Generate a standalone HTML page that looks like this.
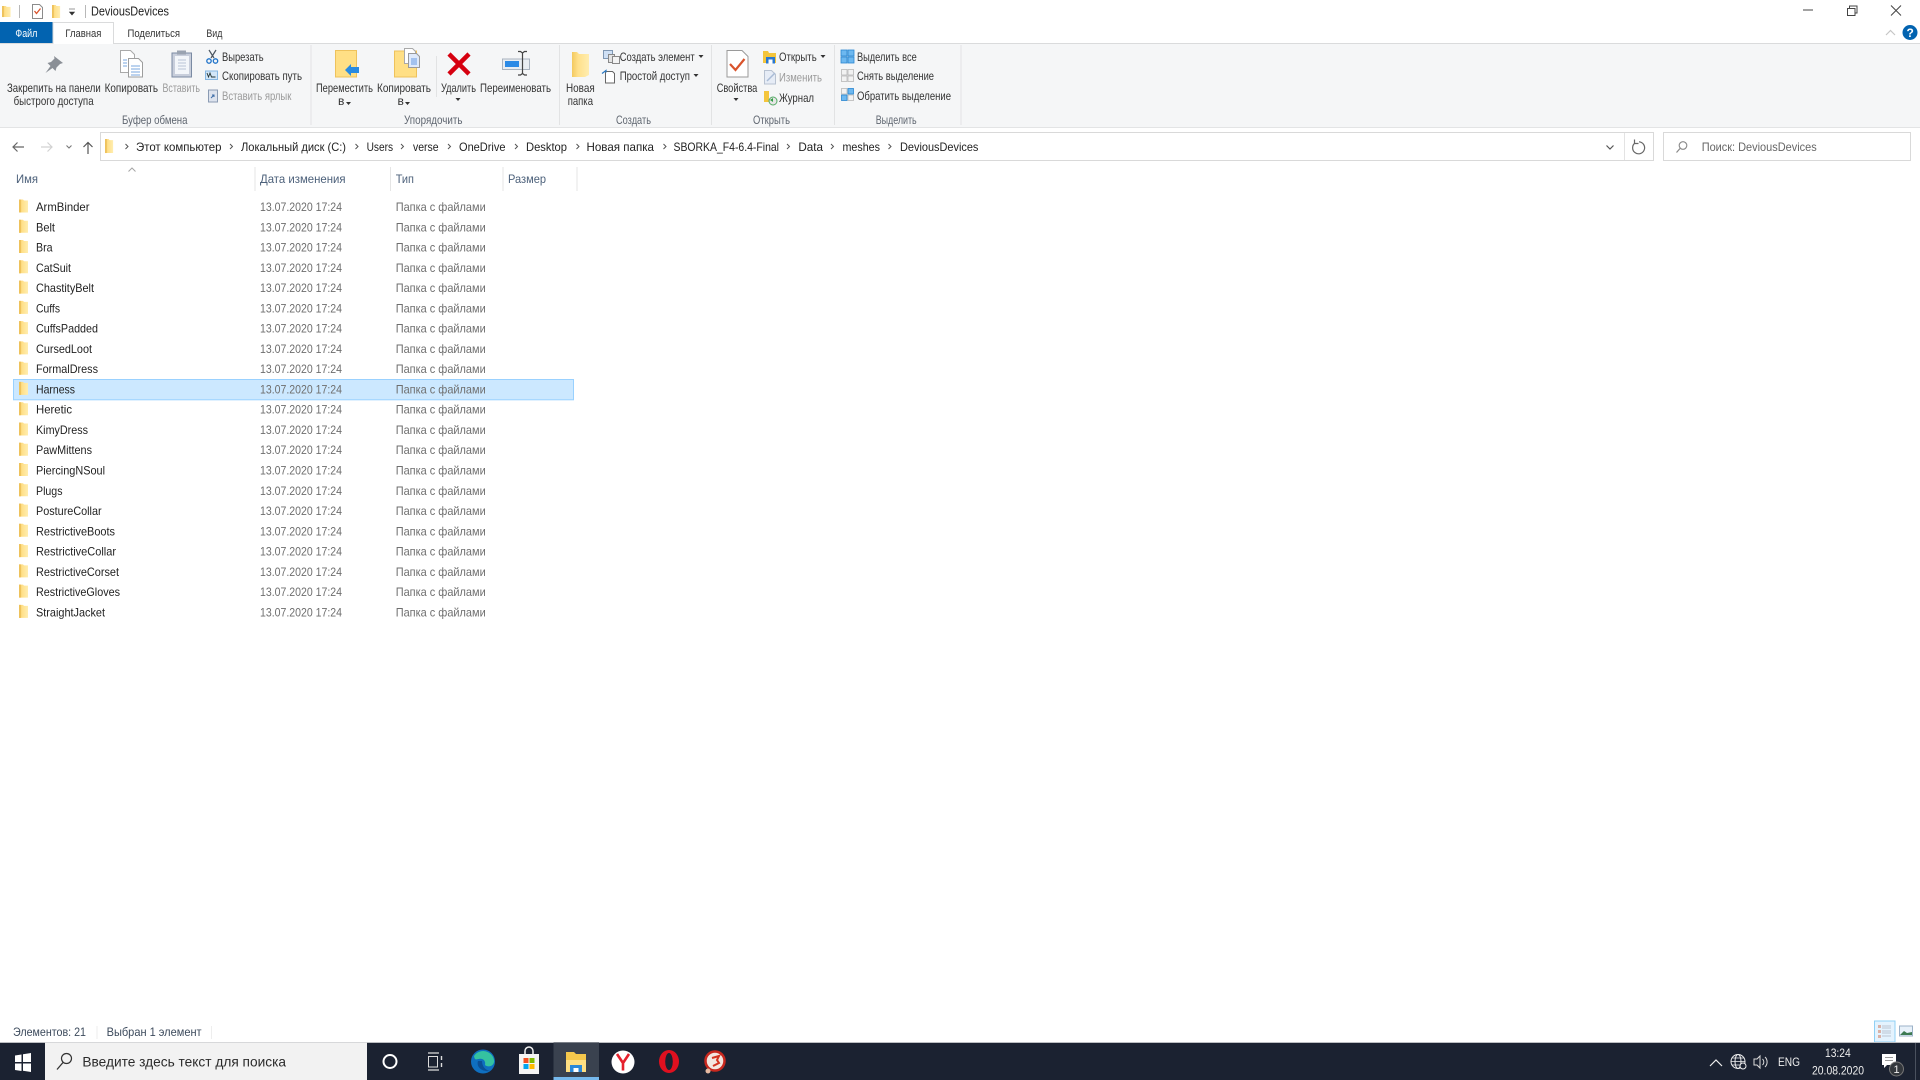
<!DOCTYPE html>
<html lang="ru"><head><meta charset="utf-8"><title>DeviousDevices</title>
<style>
html,body{margin:0;padding:0;background:#fff;overflow:hidden}
svg{display:block;position:absolute;left:0;top:0;filter:blur(.3px)}
text{font-family:"Liberation Sans","Noto Sans CJK JP",sans-serif;font-size:12px;fill:#333}
.g{fill:#9a9a9a}.l{fill:#5f6670}.t{font-size:13px;fill:#222}
.n{fill:#1f1f1f}.d{fill:#6e6e6e}.h{fill:#4c607a}.a{fill:#222;font-size:12px}
.b{fill:#2b2b2b;font-size:14px}.w{fill:#fff;font-size:12px}
</style></head><body>
<svg width="1920" height="1080" viewBox="0 0 1920 1080" xmlns="http://www.w3.org/2000/svg">
<defs>
<linearGradient id="fy" x1="0" x2="1" y1="0" y2="0"><stop offset="0" stop-color="#f3c95f"/><stop offset=".35" stop-color="#ffe08a"/><stop offset="1" stop-color="#ffedb0"/></linearGradient>
<g id="f"><path d="M0 0h4l1 1h4v12H0z" fill="url(#fy)"/><path d="M0 0h2v13H0z" fill="#eec25c"/></g>
</defs>
<rect width="1920" height="1080" fill="#fff"/>

<!-- title bar -->
<use href="#f" transform="translate(2 6) scale(.95 .85)"/>
<rect x="19" y="5" width="1" height="13" fill="#b8b8b8"/>
<path d="M32.500 4.500h7l3 3v11h-10z" fill="#fff" stroke="#8b8b8b"/><path d="M34.500 11l2 2.500 4-5" fill="none" stroke="#d9532b" stroke-width="1.300"/>
<use href="#f" transform="translate(52 5) scale(.9 1)"/>
<path d="M69 9h6M69.500 12h5l-2.500 3z" fill="#333" stroke="#333" stroke-width=".6"/>
<rect x="85" y="5" width="1" height="13" fill="#b8b8b8"/>
<text x="91" y="15.500" class="t" textLength="78" lengthAdjust="spacingAndGlyphs">DeviousDevices</text>
<path d="M1803 10h10" stroke="#444" stroke-width="1"/>
<path d="M1847.500 12.500h7.500v7h-7.500zM1849.500 12.500v-2.500h7.500v7h-2" transform="translate(0 -4)" fill="#fff" stroke="#444"/>
<path d="M1891 5.500l10 10M1901 5.500l-10 10" stroke="#444" stroke-width="1"/>

<!-- tabs -->
<rect x="0" y="22" width="52.500" height="21" fill="#0263b0"/>
<text x="15.400" y="37" class="w" textLength="22" lengthAdjust="spacingAndGlyphs" style="font-size:11px">Файл</text>
<rect x="0" y="43" width="1920" height="1" fill="#dadbdc"/>
<rect x="53.500" y="22.500" width="60" height="21.500" fill="#fff"/>
<path d="M53 44V22.500h60.500V44" fill="none" stroke="#dadbdc"/>
<text x="65.400" y="37" textLength="36" lengthAdjust="spacingAndGlyphs" style="font-size:11px">Главная</text>
<text x="127.500" y="37" textLength="52.500" lengthAdjust="spacingAndGlyphs" style="font-size:11px">Поделиться</text>
<text x="206.400" y="37" textLength="16" lengthAdjust="spacingAndGlyphs" style="font-size:11px">Вид</text>
<path d="M1886 35l4.500-4.500 4.500 4.500" fill="none" stroke="#c6c6c6" stroke-width="1.200"/>
<circle cx="1910" cy="32.500" r="7.500" fill="#0263b0"/>
<text x="1906.500" y="37" style="font-size:12px;font-weight:bold;fill:#fff">?</text>

<!-- ribbon -->
<rect x="0" y="44" width="1920" height="83" fill="#f5f6f7"/>
<rect x="0" y="127" width="1920" height="1" fill="#e3e4e5"/>
<g fill="#e2e3e4">
<rect x="310.500" y="45" width="1" height="80"/><rect x="559" y="45" width="1" height="80"/><rect x="711" y="45" width="1" height="80"/><rect x="834" y="45" width="1" height="80"/><rect x="960.500" y="45" width="1" height="80"/><rect x="436" y="56" width="1" height="41"/>
</g>

<!-- clipboard group icons -->
<path d="M54 56l9 7-3 1-3.500 3.500-1 3.500-3-3-7 5 5-7-3-3 3.500-1 3.500-3.500z" fill="#8a8f96"/>
<path d="M120.500 50.500h10l4 4v18h-14z" fill="#fff" stroke="#a9a9a9"/>
<path d="M128.500 58.500h10l4 4v14.500h-14z" fill="#fff" stroke="#9d9d9d"/>
<path d="M123 60h4M123 63h4M123 66h4M131 66h9M131 69h9M131 72h9M131 75h9" stroke="#7aa7df"/>
<rect x="172" y="53" width="19.500" height="24" fill="#c8cedb" stroke="#7a8aa3"/><rect x="175" y="56" width="14" height="18" fill="#f3f6fa"/><rect x="177" y="50.500" width="9" height="4" fill="#9aa3b1"/>
<path d="M178 60h8M178 63h8M178 66h8M178 69h8" stroke="#b8c4d6"/>
<path d="M209 50l5 8M216 50l-5 8" stroke="#4c5660" stroke-width="1.200" fill="none"/><circle cx="209" cy="61" r="2.200" fill="none" stroke="#1e72c9" stroke-width="1.300"/><circle cx="215.500" cy="61" r="2.200" fill="none" stroke="#1e72c9" stroke-width="1.300"/>
<rect x="205.500" y="71" width="12" height="8.500" fill="#d2e6f8" stroke="#85b6e2"/><path d="M207 73l1.500 4 1.500-4 1.500 4h4" fill="none" stroke="#233" stroke-width=".9"/>
<rect x="208.500" y="90" width="9" height="12" fill="#dde3ee" stroke="#8a9bb3"/><path d="M211 98l3-3m-2 0h2v2" stroke="#3f6ea8" fill="none"/>
<text x="7" y="92" textLength="93.700" lengthAdjust="spacingAndGlyphs">Закрепить на панели</text>
<text x="13.600" y="105" textLength="80" lengthAdjust="spacingAndGlyphs">быстрого доступа</text>
<text x="104.600" y="92" textLength="53.400" lengthAdjust="spacingAndGlyphs">Копировать</text>
<text x="162.500" y="92" textLength="37.500" lengthAdjust="spacingAndGlyphs" class="g">Вставить</text>
<text x="222" y="61" textLength="41.600" lengthAdjust="spacingAndGlyphs">Вырезать</text>
<text x="222" y="80" textLength="80" lengthAdjust="spacingAndGlyphs">Скопировать путь</text>
<text x="222" y="100" textLength="69.400" lengthAdjust="spacingAndGlyphs" class="g">Вставить ярлык</text>
<text x="122" y="124" textLength="65.500" lengthAdjust="spacingAndGlyphs" class="l">Буфер обмена</text>

<!-- organize -->
<rect x="335.500" y="50.500" width="21" height="26.500" fill="#ffdf85" stroke="#eec25c"/>
<path d="M345 70l6-6v3h8v6h-8v3z" fill="#2a8be0"/>
<rect x="394.500" y="51" width="22" height="26" fill="#ffdf85" stroke="#eec25c"/>
<path d="M404.500 48.500h8l3 3v12h-11z" fill="#fff" stroke="#a9a9a9"/><path d="M408.500 53.500h8l3 3v11h-11z" fill="#dfeafb" stroke="#9a9a9a"/><rect x="411" y="58" width="6" height="7" fill="#a3c2ee"/>
<path d="M449 54l20 20M469 54l-20 20" stroke="#d6000f" stroke-width="4.500"/>
<rect x="502.500" y="59" width="27" height="10.500" fill="#e9edf2" stroke="#a9b3bf"/><rect x="505" y="61" width="14" height="6" fill="#2b8ae6"/>
<path d="M518 51.500h2.500l2 1.500 2-1.500h2.500M522.500 53v21M518 75h2.500l2-1.500 2 1.500h2.500" fill="none" stroke="#444" stroke-width="1.200"/>
<text x="316" y="92" textLength="57" lengthAdjust="spacingAndGlyphs">Переместить</text>
<text x="338" y="105">в</text><path d="M346 102h5l-2.500 3z" fill="#333"/>
<text x="377" y="92" textLength="54" lengthAdjust="spacingAndGlyphs">Копировать</text>
<text x="397.500" y="105">в</text><path d="M405 102h5l-2.500 3z" fill="#333"/>
<text x="441" y="92" textLength="35" lengthAdjust="spacingAndGlyphs">Удалить</text>
<path d="M455.500 98h5l-2.500 3z" fill="#333"/>
<text x="480" y="92" textLength="71" lengthAdjust="spacingAndGlyphs">Переименовать</text>
<text x="404" y="124" textLength="58.500" lengthAdjust="spacingAndGlyphs" class="l">Упорядочить</text>

<!-- create -->
<path d="M572 52h5l2 2h10v21l-4 2h-13z" fill="url(#fy)"/>
<text x="566" y="92" textLength="28.700" lengthAdjust="spacingAndGlyphs">Новая</text>
<text x="567.700" y="105" textLength="25.300" lengthAdjust="spacingAndGlyphs">папка</text>
<rect x="603.500" y="50.500" width="9" height="8" fill="#cfe0f5" stroke="#7f97b3"/><rect x="608.500" y="54.500" width="6" height="8" fill="#e4e4e4" stroke="#888"/><rect x="612.500" y="56.500" width="7" height="7" fill="#f3f3f3" stroke="#888"/>
<path d="M605.500 71.500h7l2 2v9.500h-9z" fill="#fff" stroke="#666"/><path d="M602 73.500l4-3v2" fill="none" stroke="#2b79c2" stroke-width="1.200"/>
<text x="619.700" y="61" textLength="75" lengthAdjust="spacingAndGlyphs">Создать элемент</text><path d="M698.500 55h5l-2.500 3z" fill="#333"/>
<text x="619.700" y="80" textLength="70.300" lengthAdjust="spacingAndGlyphs">Простой доступ</text><path d="M693.500 74h5l-2.500 3z" fill="#333"/>
<text x="616" y="124" textLength="35" lengthAdjust="spacingAndGlyphs" class="l">Создать</text>

<!-- open -->
<path d="M727 50.500h15l6 6v20.500h-21z" fill="#fff" stroke="#9a9a9a"/><path d="M730 64l5.500 6 9-11" fill="none" stroke="#d9532b" stroke-width="2.200"/>
<text x="716.700" y="92" textLength="40.600" lengthAdjust="spacingAndGlyphs">Свойства</text>
<path d="M733.500 98h5l-2.500 3z" fill="#333"/>
<path d="M763 51h5l1 2h7v10h-13z" fill="#f4c53c"/><rect x="766" y="57" width="9" height="6.500" fill="#2b78d0"/><rect x="768.500" y="59.500" width="4" height="4" fill="#fff"/>
<path d="M764.500 70.500h7l4 4v9.500h-11z" fill="#e6ecf6" stroke="#b8c2d1"/><path d="M767 81l8-8" stroke="#a9bcd6" stroke-width="1.500"/>
<path d="M764 91h5v11h-5z" fill="#f4c53c"/><circle cx="773" cy="101" r="4" fill="#e6e6e6" stroke="#5a6"/><path d="M770 100l3-2v4z" fill="#2f9e44"/>
<text x="779" y="61" textLength="37.700" lengthAdjust="spacingAndGlyphs">Открыть</text><path d="M820.500 55h5l-2.500 3z" fill="#333"/>
<text x="779" y="81.500" textLength="43" lengthAdjust="spacingAndGlyphs" class="g">Изменить</text>
<text x="779" y="102" textLength="35" lengthAdjust="spacingAndGlyphs">Журнал</text>
<text x="753" y="124" textLength="37" lengthAdjust="spacingAndGlyphs" class="l">Открыть</text>

<!-- select -->
<g fill="#6db8f0" stroke="#2a86d0" stroke-width=".8"><rect x="841" y="50" width="6" height="6"/><rect x="848" y="50" width="6" height="6"/><rect x="841" y="57" width="6" height="6"/><rect x="848" y="57" width="6" height="6"/></g>
<g fill="#f2f2f2" stroke="#b8b8b8" stroke-width=".8"><rect x="841.500" y="69.500" width="5.500" height="5.500"/><rect x="848" y="69.500" width="5.500" height="5.500"/><rect x="841.500" y="76" width="5.500" height="5.500"/><rect x="848" y="76" width="5.500" height="5.500"/>
<rect x="841.500" y="88.500" width="5.500" height="5.500"/><rect x="848" y="95" width="5.500" height="5.500"/></g>
<g fill="#6db8f0" stroke="#2a86d0" stroke-width=".8"><rect x="848" y="88.500" width="5.500" height="5.500"/><rect x="841.500" y="95" width="5.500" height="5.500"/></g>
<text x="857" y="61" textLength="59.700" lengthAdjust="spacingAndGlyphs">Выделить все</text>
<text x="857" y="80" textLength="77" lengthAdjust="spacingAndGlyphs">Снять выделение</text>
<text x="857" y="100" textLength="94" lengthAdjust="spacingAndGlyphs">Обратить выделение</text>
<text x="875.700" y="124" textLength="41" lengthAdjust="spacingAndGlyphs" class="l">Выделить</text>

<!-- nav -->
<path d="M24 147H13m4.500-4.500L13 147l4.500 4.500" fill="none" stroke="#666" stroke-width="1.200"/>
<path d="M41 147h11m-4.500-4.500L52 147l-4.500 4.500" fill="none" stroke="#d2d2d2" stroke-width="1.200"/>
<path d="M66.500 145.500l2.500 2.500 2.500-2.500" fill="none" stroke="#777" stroke-width="1.100"/>
<path d="M88 154v-11.500m-4.500 4.500l4.500-4.500 4.500 4.500" fill="none" stroke="#555" stroke-width="1.200"/>
<rect x="100.500" y="132.500" width="1553" height="28" fill="#fff" stroke="#d9d9d9"/>
<rect x="1624" y="133" width="1" height="27" fill="#e3e3e3"/>
<use href="#f" transform="translate(105 139) scale(.9 1.080)"/>
<g fill="none" stroke="#555" stroke-width="1">
<path d="M125.500 144l2.500 2.500-2.500 2.500M230 144l2.500 2.500-2.500 2.500M355.500 144l2.500 2.500-2.500 2.500M401 144l2.500 2.500-2.500 2.500M448 144l2.500 2.500-2.500 2.500M515 144l2.500 2.500-2.500 2.500M576.500 144l2.500 2.500-2.500 2.500M663.500 144l2.500 2.500-2.500 2.500M787 144l2.500 2.500-2.500 2.500M831 144l2.500 2.500-2.500 2.500M888.500 144l2.500 2.500-2.500 2.500"/>
<path d="M1606.500 145.500l3.500 3.500 3.500-3.500" stroke="#555" stroke-width="1.200"/>
<path d="M1635 143a6 6 0 1 0 4-1.200M1634.500 139.500v4h4" stroke="#666" stroke-width="1.200"/>
</g>
<text class="a" x="136" y="151" textLength="85.500" lengthAdjust="spacingAndGlyphs">Этот компьютер</text>
<text class="a" x="241" y="151" textLength="105" lengthAdjust="spacingAndGlyphs">Локальный диск (C:)</text>
<text class="a" x="366.600" y="151" textLength="26.500" lengthAdjust="spacingAndGlyphs">Users</text>
<text class="a" x="413" y="151" textLength="25.600" lengthAdjust="spacingAndGlyphs">verse</text>
<text class="a" x="459" y="151" textLength="46.500" lengthAdjust="spacingAndGlyphs">OneDrive</text>
<text class="a" x="526" y="151" textLength="41" lengthAdjust="spacingAndGlyphs">Desktop</text>
<text class="a" x="586.500" y="151" textLength="67.500" lengthAdjust="spacingAndGlyphs">Новая папка</text>
<text class="a" x="673.500" y="151" textLength="105.500" lengthAdjust="spacingAndGlyphs">SBORKA_F4-6.4-Final</text>
<text class="a" x="798.400" y="151" textLength="24.600" lengthAdjust="spacingAndGlyphs">Data</text>
<text class="a" x="842.500" y="151" textLength="37.500" lengthAdjust="spacingAndGlyphs">meshes</text>
<text class="a" x="900" y="151" textLength="78.400" lengthAdjust="spacingAndGlyphs">DeviousDevices</text>
<rect x="1663.500" y="132.500" width="247" height="28" fill="#fff" stroke="#d9d9d9"/>
<circle cx="1683" cy="145.500" r="3.800" fill="none" stroke="#888" stroke-width="1.100"/><path d="M1680 148.500l-3.500 4" stroke="#888" stroke-width="1.200"/>
<text x="1701.700" y="151" textLength="115" lengthAdjust="spacingAndGlyphs" style="fill:#666">Поиск: DeviousDevices</text>

<!-- column headers -->
<path d="M128.500 171.500l3.500-3.500 3.500 3.500" fill="none" stroke="#a5a5a5"/>
<g fill="#e5e5e5"><rect x="254.500" y="167" width="1" height="24"/><rect x="390" y="167" width="1" height="24"/><rect x="502.500" y="167" width="1" height="24"/><rect x="576.500" y="167" width="1" height="24"/></g>
<text x="16" y="183" class="h" textLength="22" lengthAdjust="spacingAndGlyphs">Имя</text>
<text x="260" y="183" class="h" textLength="85.600" lengthAdjust="spacingAndGlyphs">Дата изменения</text>
<text x="395.700" y="183" class="h" textLength="18.300" lengthAdjust="spacingAndGlyphs">Тип</text>
<text x="508" y="183" class="h" textLength="38" lengthAdjust="spacingAndGlyphs">Размер</text>

<!-- selected row -->
<rect x="13.500" y="379.500" width="560" height="20.300" fill="#cce8ff" stroke="#99d1ff"/>

<!-- rows -->
<use href="#f" x="19" y="199.500"/><text x="36" y="211" class="n" textLength="53.500" lengthAdjust="spacingAndGlyphs">ArmBinder</text><text x="260" y="211" class="d" textLength="82" lengthAdjust="spacingAndGlyphs">13.07.2020 17:24</text><text x="395.700" y="211" class="d" textLength="90" lengthAdjust="spacingAndGlyphs">Папка с файлами</text>
<use href="#f" x="19" y="219.800"/><text x="36" y="231.300" class="n" textLength="19" lengthAdjust="spacingAndGlyphs">Belt</text><text x="260" y="231.300" class="d" textLength="82" lengthAdjust="spacingAndGlyphs">13.07.2020 17:24</text><text x="395.700" y="231.300" class="d" textLength="90" lengthAdjust="spacingAndGlyphs">Папка с файлами</text>
<use href="#f" x="19" y="240"/><text x="36" y="251.500" class="n" textLength="16.600" lengthAdjust="spacingAndGlyphs">Bra</text><text x="260" y="251.500" class="d" textLength="82" lengthAdjust="spacingAndGlyphs">13.07.2020 17:24</text><text x="395.700" y="251.500" class="d" textLength="90" lengthAdjust="spacingAndGlyphs">Папка с файлами</text>
<use href="#f" x="19" y="260.300"/><text x="36" y="271.800" class="n" textLength="35" lengthAdjust="spacingAndGlyphs">CatSuit</text><text x="260" y="271.800" class="d" textLength="82" lengthAdjust="spacingAndGlyphs">13.07.2020 17:24</text><text x="395.700" y="271.800" class="d" textLength="90" lengthAdjust="spacingAndGlyphs">Папка с файлами</text>
<use href="#f" x="19" y="280.600"/><text x="36" y="292.100" class="n" textLength="58" lengthAdjust="spacingAndGlyphs">ChastityBelt</text><text x="260" y="292.100" class="d" textLength="82" lengthAdjust="spacingAndGlyphs">13.07.2020 17:24</text><text x="395.700" y="292.100" class="d" textLength="90" lengthAdjust="spacingAndGlyphs">Папка с файлами</text>
<use href="#f" x="19" y="300.900"/><text x="36" y="312.400" class="n" textLength="24" lengthAdjust="spacingAndGlyphs">Cuffs</text><text x="260" y="312.400" class="d" textLength="82" lengthAdjust="spacingAndGlyphs">13.07.2020 17:24</text><text x="395.700" y="312.400" class="d" textLength="90" lengthAdjust="spacingAndGlyphs">Папка с файлами</text>
<use href="#f" x="19" y="321.100"/><text x="36" y="332.600" class="n" textLength="62" lengthAdjust="spacingAndGlyphs">CuffsPadded</text><text x="260" y="332.600" class="d" textLength="82" lengthAdjust="spacingAndGlyphs">13.07.2020 17:24</text><text x="395.700" y="332.600" class="d" textLength="90" lengthAdjust="spacingAndGlyphs">Папка с файлами</text>
<use href="#f" x="19" y="341.400"/><text x="36" y="352.900" class="n" textLength="56" lengthAdjust="spacingAndGlyphs">CursedLoot</text><text x="260" y="352.900" class="d" textLength="82" lengthAdjust="spacingAndGlyphs">13.07.2020 17:24</text><text x="395.700" y="352.900" class="d" textLength="90" lengthAdjust="spacingAndGlyphs">Папка с файлами</text>
<use href="#f" x="19" y="361.700"/><text x="36" y="373.200" class="n" textLength="62" lengthAdjust="spacingAndGlyphs">FormalDress</text><text x="260" y="373.200" class="d" textLength="82" lengthAdjust="spacingAndGlyphs">13.07.2020 17:24</text><text x="395.700" y="373.200" class="d" textLength="90" lengthAdjust="spacingAndGlyphs">Папка с файлами</text>
<use href="#f" x="19" y="381.900"/><text x="36" y="393.400" class="n" textLength="39" lengthAdjust="spacingAndGlyphs">Harness</text><text x="260" y="393.400" class="d" textLength="82" lengthAdjust="spacingAndGlyphs">13.07.2020 17:24</text><text x="395.700" y="393.400" class="d" textLength="90" lengthAdjust="spacingAndGlyphs">Папка с файлами</text>
<use href="#f" x="19" y="402.200"/><text x="36" y="413.700" class="n" textLength="36" lengthAdjust="spacingAndGlyphs">Heretic</text><text x="260" y="413.700" class="d" textLength="82" lengthAdjust="spacingAndGlyphs">13.07.2020 17:24</text><text x="395.700" y="413.700" class="d" textLength="90" lengthAdjust="spacingAndGlyphs">Папка с файлами</text>
<use href="#f" x="19" y="422.500"/><text x="36" y="434" class="n" textLength="52" lengthAdjust="spacingAndGlyphs">KimyDress</text><text x="260" y="434" class="d" textLength="82" lengthAdjust="spacingAndGlyphs">13.07.2020 17:24</text><text x="395.700" y="434" class="d" textLength="90" lengthAdjust="spacingAndGlyphs">Папка с файлами</text>
<use href="#f" x="19" y="442.700"/><text x="36" y="454.200" class="n" textLength="56" lengthAdjust="spacingAndGlyphs">PawMittens</text><text x="260" y="454.200" class="d" textLength="82" lengthAdjust="spacingAndGlyphs">13.07.2020 17:24</text><text x="395.700" y="454.200" class="d" textLength="90" lengthAdjust="spacingAndGlyphs">Папка с файлами</text>
<use href="#f" x="19" y="463"/><text x="36" y="474.500" class="n" textLength="69" lengthAdjust="spacingAndGlyphs">PiercingNSoul</text><text x="260" y="474.500" class="d" textLength="82" lengthAdjust="spacingAndGlyphs">13.07.2020 17:24</text><text x="395.700" y="474.500" class="d" textLength="90" lengthAdjust="spacingAndGlyphs">Папка с файлами</text>
<use href="#f" x="19" y="483.300"/><text x="36" y="494.800" class="n" textLength="26.500" lengthAdjust="spacingAndGlyphs">Plugs</text><text x="260" y="494.800" class="d" textLength="82" lengthAdjust="spacingAndGlyphs">13.07.2020 17:24</text><text x="395.700" y="494.800" class="d" textLength="90" lengthAdjust="spacingAndGlyphs">Папка с файлами</text>
<use href="#f" x="19" y="503.600"/><text x="36" y="515.100" class="n" textLength="65.600" lengthAdjust="spacingAndGlyphs">PostureCollar</text><text x="260" y="515.100" class="d" textLength="82" lengthAdjust="spacingAndGlyphs">13.07.2020 17:24</text><text x="395.700" y="515.100" class="d" textLength="90" lengthAdjust="spacingAndGlyphs">Папка с файлами</text>
<use href="#f" x="19" y="523.800"/><text x="36" y="535.300" class="n" textLength="79" lengthAdjust="spacingAndGlyphs">RestrictiveBoots</text><text x="260" y="535.300" class="d" textLength="82" lengthAdjust="spacingAndGlyphs">13.07.2020 17:24</text><text x="395.700" y="535.300" class="d" textLength="90" lengthAdjust="spacingAndGlyphs">Папка с файлами</text>
<use href="#f" x="19" y="544.100"/><text x="36" y="555.600" class="n" textLength="80" lengthAdjust="spacingAndGlyphs">RestrictiveCollar</text><text x="260" y="555.600" class="d" textLength="82" lengthAdjust="spacingAndGlyphs">13.07.2020 17:24</text><text x="395.700" y="555.600" class="d" textLength="90" lengthAdjust="spacingAndGlyphs">Папка с файлами</text>
<use href="#f" x="19" y="564.400"/><text x="36" y="575.900" class="n" textLength="83" lengthAdjust="spacingAndGlyphs">RestrictiveCorset</text><text x="260" y="575.900" class="d" textLength="82" lengthAdjust="spacingAndGlyphs">13.07.2020 17:24</text><text x="395.700" y="575.900" class="d" textLength="90" lengthAdjust="spacingAndGlyphs">Папка с файлами</text>
<use href="#f" x="19" y="584.600"/><text x="36" y="596.100" class="n" textLength="84" lengthAdjust="spacingAndGlyphs">RestrictiveGloves</text><text x="260" y="596.100" class="d" textLength="82" lengthAdjust="spacingAndGlyphs">13.07.2020 17:24</text><text x="395.700" y="596.100" class="d" textLength="90" lengthAdjust="spacingAndGlyphs">Папка с файлами</text>
<use href="#f" x="19" y="604.900"/><text x="36" y="616.400" class="n" textLength="69" lengthAdjust="spacingAndGlyphs">StraightJacket</text><text x="260" y="616.400" class="d" textLength="82" lengthAdjust="spacingAndGlyphs">13.07.2020 17:24</text><text x="395.700" y="616.400" class="d" textLength="90" lengthAdjust="spacingAndGlyphs">Папка с файлами</text>

<!-- status bar -->
<text x="13" y="1036" textLength="73" lengthAdjust="spacingAndGlyphs" style="fill:#3c4a5c">Элементов: 21</text>
<rect x="96.500" y="1026" width="1" height="13" fill="#eee"/>
<text x="106.600" y="1036" textLength="95" lengthAdjust="spacingAndGlyphs" style="fill:#3c4a5c">Выбран 1 элемент</text>
<rect x="211" y="1026" width="1" height="13" fill="#eee"/>
<rect x="1874.500" y="1021" width="20.500" height="21" fill="#e4f3fe" stroke="#8fd0f5"/>
<path d="M1882 1026h9M1882 1031h9M1882 1036h9M1882 1028h9M1882 1033h9" stroke="#aeb8c2" stroke-width=".8"/>
<rect x="1878" y="1025" width="3" height="3" fill="#d9b1a6"/><rect x="1878" y="1030" width="3" height="3" fill="#d9b1a6"/><rect x="1878" y="1035" width="3" height="3" fill="#d9b1a6"/>
<rect x="1899.500" y="1026" width="13" height="10" fill="#e8f1fa" stroke="#9cb2c8"/><path d="M1900 1035l4-4 3 2 5-1v3z" fill="#3d7a52"/>

<!-- taskbar -->
<rect x="0" y="1042.500" width="1920" height="37.500" fill="#1b2231"/>
<rect x="0" y="1042" width="1920" height="1" fill="#bcbec2"/>
<rect x="45" y="1042.500" width="322" height="37.500" fill="#f2f2f2"/>
<path d="M15 1055.500l6.500-1v7.500H15zM23 1054.200l8-1.200V1062h-8zM15 1063.500h6.500v7.500l-6.500-1zM23 1063.500h8v8.500l-8-1.200z" fill="#fff"/>
<circle cx="66.500" cy="1058.500" r="5" fill="none" stroke="#333" stroke-width="1.200"/><path d="M63 1062.500l-6 7" stroke="#333" stroke-width="1.300"/>
<text x="82.400" y="1066.500" class="b" textLength="203.600" lengthAdjust="spacingAndGlyphs">Введите здесь текст для поиска</text>
<circle cx="390" cy="1061.500" r="6.500" fill="none" stroke="#fff" stroke-width="2"/>
<path d="M428 1053h11M428 1070h11" stroke="#ddd" stroke-width="1.200"/><rect x="428.500" y="1056.500" width="9" height="10.500" fill="none" stroke="#ddd"/><path d="M441.500 1056v4M441.500 1063v4" stroke="#ddd" stroke-width="1.400"/>
<circle cx="483" cy="1061.500" r="12" fill="#0f6fc0"/><path d="M474 1056a11 11 0 0 1 20 4c1 6-6 8-9 5 1-4-2-7-6-6-3 0-4 2-5-3z" fill="#35c2a0"/><path d="M478 1061c-2 6 4 11 12 10-5-1-8-5-8-10z" fill="#0b4f96"/>
<path d="M519 1054h20v20h-20z" fill="#f4f4f4"/><path d="M525 1054v-3a4 4 0 0 1 8 0v3" fill="none" stroke="#f4f4f4" stroke-width="1.500"/>
<rect x="523.500" y="1058" width="5" height="5" fill="#f25022"/><rect x="529.500" y="1058" width="5" height="5" fill="#7fba00"/><rect x="523.500" y="1064" width="5" height="5" fill="#00a4ef"/><rect x="529.500" y="1064" width="5" height="5" fill="#ffb900"/>
<rect x="553.500" y="1042.500" width="45.500" height="37.500" fill="#3a424f"/><rect x="553.500" y="1077" width="45.500" height="3" fill="#76b9ed"/>
<path d="M566 1052h8l2 2h10v18h-20z" fill="#f6c84c"/><rect x="566" y="1060" width="20" height="12" fill="#ffdf82"/><rect x="570" y="1065" width="12" height="7" fill="#2b88d8"/><rect x="573.500" y="1068" width="5" height="4" fill="#fff"/>
<circle cx="623" cy="1062" r="11.500" fill="#fff"/><path d="M617 1054l6 9 6-9M623 1063v7.500" fill="none" stroke="#e5202c" stroke-width="2.600"/>
<ellipse cx="669" cy="1061.500" rx="10" ry="11.500" fill="#e0101f"/><ellipse cx="669" cy="1061.500" rx="3.800" ry="8.500" fill="#1b2231"/>
<circle cx="715" cy="1061" r="9.500" fill="#f3e6df" stroke="#c8281e" stroke-width="2.500"/><path d="M712 1058l7-2-2 4 2 3-6 3" fill="none" stroke="#d4331f" stroke-width="2"/><circle cx="708" cy="1071" r="2.500" fill="#e7b9a0"/>

<!-- tray -->
<path d="M1710 1066l6-6 6 6" fill="none" stroke="#eee" stroke-width="1.200"/>
<circle cx="1738" cy="1061.500" r="7" fill="none" stroke="#eee"/><ellipse cx="1738" cy="1061.500" rx="3" ry="7" fill="none" stroke="#eee"/><path d="M1731 1061.500h14M1732 1058h12M1732 1065h12" stroke="#eee" stroke-width=".8"/>
<circle cx="1743" cy="1066" r="3" fill="#1b2231" stroke="#eee"/>
<path d="M1754 1059h3l3-3v12l-3-3h-3zM1762.500 1059a4 4 0 0 1 0 6M1765 1057a7 7 0 0 1 0 10" fill="none" stroke="#dcdcdc"/>
<text x="1778" y="1066" textLength="22" lengthAdjust="spacingAndGlyphs" style="fill:#eee">ENG</text>
<text x="1825" y="1057" textLength="25.700" lengthAdjust="spacingAndGlyphs" style="fill:#eee">13:24</text>
<text x="1812" y="1074.500" textLength="52" lengthAdjust="spacingAndGlyphs" style="fill:#eee">20.08.2020</text>
<path d="M1882 1054h14v11h-9l-3 3v-3h-2z" fill="#fff"/><path d="M1885 1057.500h8M1885 1060.500h8" stroke="#999"/>
<circle cx="1896.500" cy="1069" r="7" fill="#33373c" stroke="#777"/><text x="1893.500" y="1073" style="fill:#eee;font-size:11px">1</text>
<rect x="1915" y="1043" width="1" height="37" fill="#4a515e"/>
</svg>
</body></html>
